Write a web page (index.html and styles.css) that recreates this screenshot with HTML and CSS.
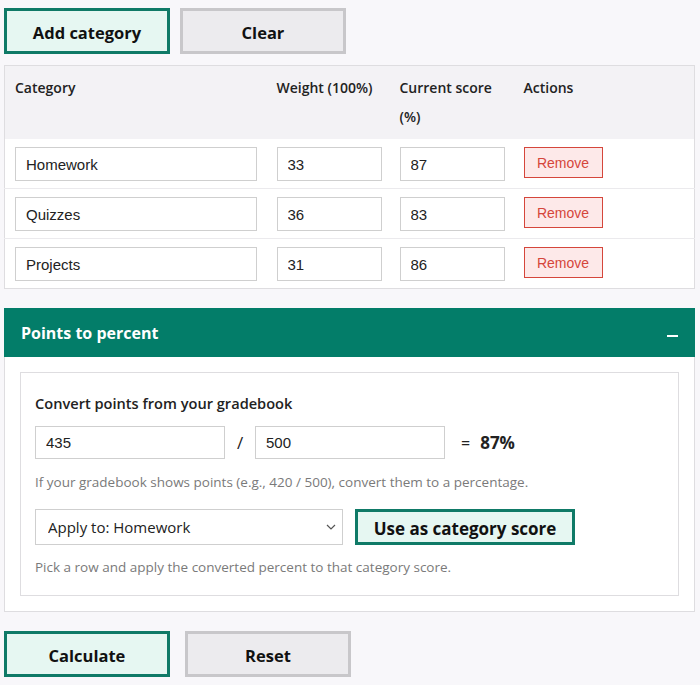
FILE: index.html
```html
<!DOCTYPE html>
<html lang="en">
<head>
    <meta charset="UTF-8">
    <meta name="viewport" content="width=device-width, initial-scale=1.0">
    <title>Weighted Grade Calculator</title>
    <link rel="stylesheet" href="styles.css">
</head>
<body>
    <div class="actions top-actions">
        <button class="btn btn-primary">Add category</button>
        <button class="btn btn-secondary">Clear</button>
    </div>

    <table class="cat-table">
        <colgroup>
            <col class="col-name">
            <col class="col-weight">
            <col class="col-score">
            <col>
        </colgroup>
        <thead>
            <tr>
                <th>Category</th>
                <th>Weight (100%)</th>
                <th>Current score (%)</th>
                <th>Actions</th>
            </tr>
        </thead>
        <tbody>
            <tr>
                <td><input type="text" value="Homework"></td>
                <td><input type="text" value="33"></td>
                <td><input type="text" value="87"></td>
                <td><button class="btn-remove">Remove</button></td>
            </tr>
            <tr>
                <td><input type="text" value="Quizzes"></td>
                <td><input type="text" value="36"></td>
                <td><input type="text" value="83"></td>
                <td><button class="btn-remove">Remove</button></td>
            </tr>
            <tr>
                <td><input type="text" value="Projects"></td>
                <td><input type="text" value="31"></td>
                <td><input type="text" value="86"></td>
                <td><button class="btn-remove">Remove</button></td>
            </tr>
        </tbody>
    </table>

    <div class="panel">
        <div class="panel-head">
            <span>Points to percent</span>
            <span class="collapse-mark"></span>
        </div>
        <div class="panel-body">
            <div class="converter">
                <div class="conv-title">Convert points from your gradebook</div>
                <div class="conv-row">
                    <input type="text" class="pts" value="435">
                    <span class="slash">/</span>
                    <input type="text" class="pts" value="500">
                    <span class="equals">=</span>
                    <span class="result">87%</span>
                </div>
                <p class="hint">If your gradebook shows points (e.g., 420 / 500), convert them to a percentage.</p>
                <div class="apply-row">
                    <select class="apply-select">
                        <option>Apply to: Homework</option>
                        <option>Apply to: Quizzes</option>
                        <option>Apply to: Projects</option>
                    </select>
                    <button class="btn btn-primary btn-apply">Use as category score</button>
                </div>
                <p class="hint hint-last">Pick a row and apply the converted percent to that category score.</p>
            </div>
        </div>
    </div>

    <div class="actions bottom-actions">
        <button class="btn btn-primary">Calculate</button>
        <button class="btn btn-secondary">Reset</button>
    </div>
</body>
</html>
```

FILE: styles.css
```css
body {
    margin: 8px 5px 8px 4px;
    background: #f8f7fa;
    font-family: "Open Sans", "Noto Sans", sans-serif;
    color: #222;
}
.actions {
    display: flex;
    gap: 10px;
}
.bottom-actions {
    gap: 15px;
    margin-top: 19px;
}
.btn {
    width: 166px;
    height: 46px;
    padding: 3px 0 0;
    font-family: "Open Sans", sans-serif;
    font-size: 16.5px;
    font-weight: 700;
    color: #111;
    cursor: pointer;
    border-radius: 0;
}
.btn-primary {
    background: #e6f7f2;
    border: 3px solid #0f7a67;
}
.btn-secondary {
    background: #ecebee;
    border: 3px solid #c8c7ca;
}
.cat-table {
    width: 100%;
    margin-top: 11px;
    border-collapse: collapse;
    table-layout: fixed;
    background: #fff;
    border: 1px solid #dedde0;
}
.col-name { width: 262px; }
.col-weight { width: 123px; }
.col-score { width: 124px; }
.cat-table th {
    background: #f3f2f5;
    text-align: left;
    vertical-align: top;
    font-size: 14px;
    font-weight: 600;
    line-height: 29px;
    padding: 7px 10px 8px;
    color: #222;
}
.cat-table td {
    padding: 8px 10px 7px;
    border-top: 1px solid #ebeaed;
}
.cat-table tbody tr:first-child td {
    border-top: none;
}
.cat-table input {
    box-sizing: border-box;
    width: 100%;
    height: 34px;
    padding: 0 10px;
    border: 1px solid #cfcfcf;
    font-family: "Liberation Sans", Arial, sans-serif;
    font-size: 15px;
    color: #222;
}
.cat-table td:nth-child(2) input,
.cat-table td:nth-child(3) input {
    width: 105px;
}
.btn-remove {
    width: 79px;
    height: 31px;
    background: #fde9e9;
    border: 1px solid #d5463b;
    color: #d5463b;
    font-family: "Liberation Sans", Arial, sans-serif;
    font-size: 14px;
    cursor: pointer;
    margin-bottom: 3px;
}
.panel {
    margin-top: 19px;
}
.panel-head {
    display: flex;
    justify-content: space-between;
    align-items: center;
    height: 49px;
    padding: 0 17px 0 17px;
    background: #037d69;
    color: #fff;
    font-size: 16px;
    font-weight: 700;
}
.collapse-mark {
    width: 11px;
    height: 2px;
    background: #fff;
    margin-top: 6px;
}
.panel-body {
    background: #fff;
    border: 1px solid #dedde0;
    border-top: none;
    padding: 15px;
}
.converter {
    border: 1px solid #dedde0;
    padding: 20px 14px 18px;
}
.conv-title {
    font-size: 14.6px;
    font-weight: 600;
    line-height: 20px;
}
.conv-row {
    display: flex;
    align-items: center;
    margin-top: 13px;
}
.pts {
    box-sizing: border-box;
    width: 190px;
    height: 33px;
    padding: 0 10px;
    border: 1px solid #cfcfcf;
    font-family: "Liberation Sans", Arial, sans-serif;
    font-size: 15px;
    color: #222;
}
.slash {
    width: 30px;
    text-align: center;
    font-size: 17px;
}
.equals {
    margin: 0 10px 0 16px;
    font-size: 16px;
}
.result {
    font-size: 17px;
    font-weight: 700;
}
.hint {
    margin: 13px 0 0;
    font-size: 13.5px;
    line-height: 20px;
    color: #7a7a7a;
}
.hint-last {
    margin-top: 12px;
}
.apply-row {
    display: flex;
    gap: 12px;
    margin-top: 17px;
}
.apply-select {
    width: 308px;
    height: 36px;
    padding: 0 12px;
    border: 1px solid #cfcfcf;
    background: #fff url("data:image/svg+xml,%3Csvg xmlns='http://www.w3.org/2000/svg' width='10' height='6'%3E%3Cpath d='M1 1l4 4 4-4' fill='none' stroke='%23555' stroke-width='1.2'/%3E%3C/svg%3E") no-repeat right 6px center;
    appearance: none;
    font-family: "Open Sans", sans-serif;
    font-size: 15px;
    color: #222;
}
.btn-apply {
    width: 220px;
    height: 36px;
    padding: 2px 0 0;
    font-size: 17px;
}
```
